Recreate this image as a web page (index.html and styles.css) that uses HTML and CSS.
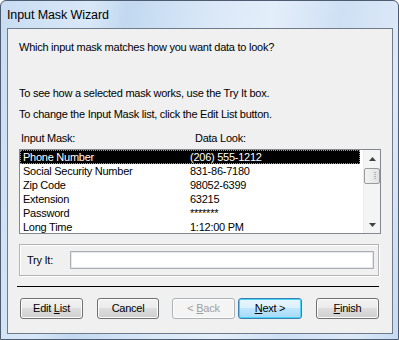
FILE: index.html
```html
<!DOCTYPE html>
<html>
<head>
<meta charset="utf-8">
<link rel="stylesheet" href="styles.css">
</head>
<body>
<div class="window">
  <div class="titlebar"><span class="title">Input Mask Wizard</span></div>
  <div class="client">
    <p class="line l1">Which input mask matches how you want data to look?</p>
    <p class="line l2">To see how a selected mask works, use the Try It box.</p>
    <p class="line l3">To change the Input Mask list, click the Edit List button.</p>
    <div class="heads"><span class="h1">Input Mask:</span><span class="h2">Data Look:</span></div>
    <div class="listbox">
      <div class="rows">
        <div class="row sel"><span class="c1">Phone Number</span><span class="c2">(206) 555-1212</span></div>
        <div class="row"><span class="c1">Social Security Number</span><span class="c2">831-86-7180</span></div>
        <div class="row"><span class="c1">Zip Code</span><span class="c2">98052-6399</span></div>
        <div class="row"><span class="c1">Extension</span><span class="c2">63215</span></div>
        <div class="row"><span class="c1">Password</span><span class="c2">*******</span></div>
        <div class="row"><span class="c1">Long Time</span><span class="c2">1:12:00 PM</span></div>
      </div>
      <div class="scrollbar">
        <div class="arrow up"><svg width="7" height="4" viewBox="0 0 7 4"><path d="M3.5 0 L7 4 L0 4 Z" fill="#404040"/></svg></div>
        <div class="thumb"><span class="grip"></span></div>
        <div class="track"></div>
        <div class="arrow down"><svg width="7" height="4" viewBox="0 0 7 4"><path d="M0 0 L7 0 L3.5 4 Z" fill="#404040"/></svg></div>
      </div>
    </div>
    <div class="tryit">
      <span class="trylabel">Try It:</span>
      <div class="tryinput"></div>
    </div>
    <div class="sep"></div>
    <div class="buttons">
      <div class="btn b-edit"><span class="lbl">Edit <u>L</u>ist</span></div>
      <div class="btn b-cancel"><span class="lbl">Cancel</span></div>
      <div class="btn b-back disabled"><span class="lbl">&lt; <u>B</u>ack</span></div>
      <div class="btn b-next default"><span class="lbl"><u>N</u>ext &gt;</span></div>
      <div class="btn b-finish"><span class="lbl"><u>F</u>inish</span></div>
    </div>
  </div>
</div>
</body>
</html>
```
FILE: styles.css
```css
html, body {
  margin: 0;
  padding: 0;
  width: 399px;
  height: 340px;
  overflow: hidden;
  background: #ffffff;
}
.window {
  box-sizing: border-box;
  width: 399px;
  height: 340px;
  border: 1px solid #4d5c70;
  border-radius: 6px 6px 0 0;
  background: linear-gradient(100deg, #c8dcf2 0%, #d9e8f8 20%, #c2d8f0 28%, #d8e7f7 45%, #e4eefa 60%, #cfe0f4 75%, #dde9f8 90%, #c6daf1 100%);
  display: flex;
  flex-direction: column;
  font-family: "Liberation Sans", Arial, sans-serif;
}
.titlebar {
  height: 26px;
  display: flex;
  align-items: center;
  padding-left: 6px;
  padding-top: 1px;
}
.title {
  font-family: "Liberation Sans", Arial, sans-serif;
  font-size: 12.5px;
  letter-spacing: -0.1px;
  color: #000;
}
.client {
  box-sizing: border-box;
  margin: 0 5px 5px 6px;
  flex: 1;
  border: 1px solid #6f7b8a;
  background: #f0f0f0;
  font-size: 11px;
  letter-spacing: -0.25px;
  color: #000;
  padding: 0 0 0 11px;
  display: flex;
  flex-direction: column;
}
.line {
  margin: 0;
  line-height: 13px;
  height: 13px;
  white-space: nowrap;
}
.l1 { margin-top: 12px; }
.l2 { margin-top: 33px; }
.l3 { margin-top: 8px; }
.heads {
  margin-top: 11px;
  height: 13px;
  line-height: 13px;
  display: flex;
}
.h1 { margin-left: 2px; width: 174px; }
.listbox {
  box-sizing: border-box;
  margin-top: 4px;
  width: 362px;
  height: 85px;
  border: 1px solid #828790;
  background: #fff;
  display: flex;
  overflow: hidden;
}
.rows {
  flex: 1;
  overflow: hidden;
}
.row {
  height: 14px;
  line-height: 14px;
  display: flex;
  white-space: nowrap;
  box-sizing: border-box;
}
.row .c1 { width: 167px; padding-left: 3px; }
.row .c2 { flex: 1; }
.row.sel {
  background: #000;
  color: #fff;
  outline: 1px dotted #9a9a9a;
  outline-offset: -1px;
  margin-right: 3px;
}
.scrollbar {
  width: 17px;
  display: flex;
  flex-direction: column;
  background: #f4f4f4;
  border-left: 1px solid #ececec;
  box-sizing: border-box;
}
.arrow {
  height: 17px;
  display: flex;
  align-items: center;
  justify-content: center;
}
.thumb {
  box-sizing: border-box;
  margin: 1px 0 0 0;
  height: 16px;
  border: 1px solid #9a9a9a;
  border-radius: 2px;
  background: linear-gradient(90deg, #f2f2f2, #e2e2e2);
  display: flex;
  align-items: center;
  justify-content: flex-end;
  padding-right: 3px;
}
.grip {
  width: 2px;
  height: 8px;
  background: repeating-linear-gradient(180deg, #b5b5b5 0 1px, transparent 1px 2px);
}
.track { flex: 1; }
.tryit {
  box-sizing: border-box;
  margin-top: 10px;
  width: 360px;
  height: 32px;
  border: 1px solid #b4b4b4;
  box-shadow: inset 1px 1px 0 #fff, 1px 1px 0 #fff;
  display: flex;
  align-items: center;
  padding-left: 7px;
}
.trylabel { width: 43px; }
.tryinput {
  box-sizing: border-box;
  width: 304px;
  height: 18px;
  background: #fff;
  border: 1px solid #abadb3;
  box-shadow: inset 0 0 0 1px #e3e9ef;
}
.sep {
  margin-top: 10px;
  margin-left: -2px;
  width: 362px;
  height: 1px;
  background: #000;
}
.buttons {
  margin-top: 11px;
  display: flex;
}
.btn {
  box-sizing: border-box;
  width: 63px;
  height: 21px;
  border: 1px solid #707070;
  border-radius: 3px;
  background: linear-gradient(180deg, #f2f2f2 0%, #ebebeb 50%, #dddddd 50%, #cfcfcf 100%);
  box-shadow: inset 0 0 0 1px #fcfcfc;
  display: flex;
  align-items: center;
  justify-content: center;
  line-height: 13px;
}
.lbl { white-space: pre; }
.btn u { text-decoration: underline; }
.b-edit { margin-left: 1px; }
.b-cancel { margin-left: 14px; width: 62px; }
.b-back { margin-left: 13px; }
.b-next { margin-left: 3px; width: 64px; }
.b-finish { margin-left: 14px; }
.btn.disabled {
  border-color: #adb2b5;
  background: #f4f4f4;
  color: #a0a0a0;
}
.btn.default {
  border-color: #3c7fb1;
  background: linear-gradient(180deg, #eaf6fd 0%, #d9f0fc 50%, #bee6fd 50%, #a7d9f5 100%);
  box-shadow: inset 0 0 0 1px #48d4fa;
}
```
